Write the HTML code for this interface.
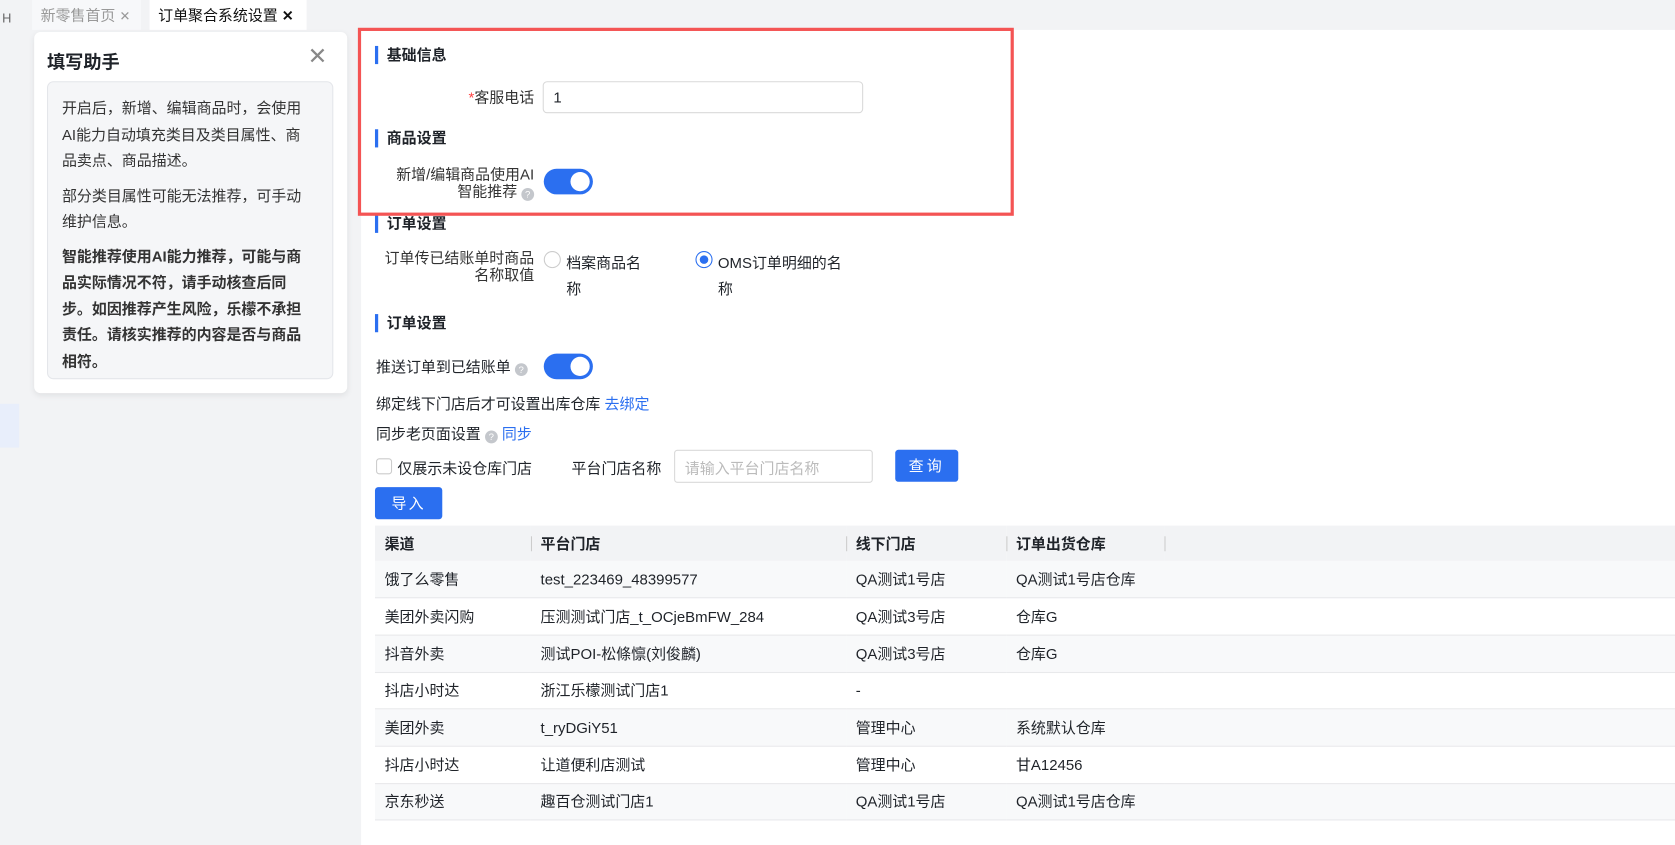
<!DOCTYPE html>
<html><head><meta charset="utf-8"><style>
*{box-sizing:border-box;margin:0;padding:0}
html,body{width:1675px;height:845px;overflow:hidden;background:#f2f3f5}
#w{position:absolute;left:0;top:0;width:1568px;height:791px;transform:scale(1.0683);transform-origin:0 0;font-family:"Liberation Sans","Noto Sans CJK SC",sans-serif;font-size:14px;color:#1f2329}
.abs{position:absolute}
.side{left:0;top:0;width:18px;height:791px;background:#f2f3f5}
.tab{position:absolute;top:0;height:28px;line-height:28px;font-size:14px;padding:0 8px}
.main{left:338px;top:28px;width:1230px;height:763px;background:#fff}
.helper{left:32px;top:30px;width:293px;height:338px;background:#fff;border-radius:6px;box-shadow:0 2px 6px rgba(0,0,0,.08)}
.hbox{position:absolute;left:12px;top:46px;width:268px;height:279px;background:#f5f6f8;border:1px solid #e4e6ea;border-radius:6px;padding:12px 16px 12px 13px;font-size:14px;line-height:24.5px;color:#333}
.hbox p{margin-bottom:8px}
.sec{position:absolute;font-weight:bold;font-size:14px;padding-left:8px;border-left:3px solid #2b6ff0;line-height:17px}
.lbl{position:absolute;text-align:right;font-size:14px;color:#333;line-height:16px}
.sw{position:absolute;width:46px;height:24px;border-radius:12px;background:#2b6ff0}
.sw:after{content:"";position:absolute;right:3px;top:3px;width:18px;height:18px;border-radius:50%;background:#fff}
.q{display:inline-block;width:12px;height:12px;border-radius:50%;background:#c4c7cc;color:#fff;font-size:9px;line-height:12px;text-align:center;vertical-align:-1px}
.btn{position:absolute;background:#2b6ff0;color:#fff;border-radius:3px;text-align:center;font-size:14px}
table{position:absolute;left:351px;top:492px;width:1217px;border-collapse:collapse}
th{background:#f2f3f5;height:33px;text-align:left;font-weight:bold;padding-left:9px;position:relative}
td{height:34.7px;padding-left:9px;border-bottom:1px solid #e8e9eb}
tr:nth-child(even) td{background:#f8f9fa}
th span{position:absolute;left:0;top:10px;width:1px;height:14px;background:#ccc}
</style></head><body><div id="w">
<div class="abs side"><div class="abs" style="left:0;top:378px;width:18px;height:41px;background:#e8eefb"></div><div class="abs" style="left:2px;top:10px;font-size:12px;color:#666">H</div></div>
<div class="abs" style="left:30px;top:0;width:102px;height:28px;background:#f7f8fa"></div>
<div class="tab" style="left:30px;color:#999">新零售首页 <span style="font-size:12px">✕</span></div>
<div class="abs" style="left:140px;top:0;width:147px;height:28px;background:#fff"></div>
<div class="tab" style="left:140px;color:#111">订单聚合系统设置 <b style="font-size:13px">✕</b></div>
<div class="abs main"></div>
<div class="abs helper">
<div class="abs" style="left:12px;top:14px;font-size:17px;font-weight:bold">填写助手</div>
<div class="abs" style="left:256px;top:10px;font-size:22px;color:#888;font-weight:300">✕</div>
<div class="hbox">
<p>开启后，新增、编辑商品时，会使用AI能力自动填充类目及类目属性、商品卖点、商品描述。</p>
<p>部分类目属性可能无法推荐，可手动维护信息。</p>
<p style="font-weight:bold">智能推荐使用AI能力推荐，可能与商品实际情况不符，请手动核查后同步。如因推荐产生风险，乐檬不承担责任。请核实推荐的内容是否与商品相符。</p>
</div></div>
<div class="abs" style="left:335px;top:26px;width:614px;height:176px;border:3px solid #f45454;z-index:3"></div>
<div class="sec" style="left:351px;top:43px">基础信息</div>
<div class="lbl" style="left:360px;top:83px;width:140px"><span style="color:#f44">*</span>客服电话</div>
<div class="abs" style="left:508px;top:76px;width:300px;height:30px;border:1px solid #d9d9d9;border-radius:4px;padding:6px 9px;font-size:14px">1</div>
<div class="sec" style="left:351px;top:121px">商品设置</div>
<div class="lbl" style="left:340px;top:155px;width:160px">新增/编辑商品使用AI<br>智能推荐 <span class="q">?</span></div>
<div class="sw" style="left:509px;top:158px"></div>
<div class="sec" style="left:351px;top:201px">订单设置</div>
<div class="lbl" style="left:340px;top:233px;width:160px">订单传已结账单时商品<br>名称取值</div>
<div class="abs" style="left:509px;top:235px;width:16px;height:16px;border:1px solid #ccc;border-radius:50%"></div>
<div class="abs" style="left:530px;top:234px;line-height:24px">档案商品名<br>称</div>
<div class="abs" style="left:651px;top:235px;width:16px;height:16px;border:1px solid #2b6ff0;border-radius:50%"><div class="abs" style="left:3px;top:3px;width:8px;height:8px;border-radius:50%;background:#2b6ff0"></div></div>
<div class="abs" style="left:672px;top:234px;line-height:24px">OMS订单明细的名<br>称</div>
<div class="sec" style="left:351px;top:294px">订单设置</div>
<div class="abs" style="left:352px;top:333px">推送订单到已结账单 <span class="q">?</span></div>
<div class="sw" style="left:509px;top:331px"></div>
<div class="abs" style="left:352px;top:368px">绑定线下门店后才可设置出库仓库 <span style="color:#2b6ff0">去绑定</span></div>
<div class="abs" style="left:352px;top:396px">同步老页面设置 <span class="q">?</span> <span style="color:#2b6ff0">同步</span></div>
<div class="abs" style="left:352px;top:429px;width:15px;height:15px;border:1px solid #ccc;border-radius:3px"></div>
<div class="abs" style="left:372px;top:428px">仅展示未设仓库门店</div>
<div class="abs" style="left:535px;top:428px">平台门店名称</div>
<div class="abs" style="left:631px;top:421px;width:186px;height:31px;border:1px solid #d9d9d9;border-radius:3px;padding:6px 9px;color:#bbb">请输入平台门店名称</div>
<div class="btn" style="left:838px;top:421px;width:59px;height:30px;line-height:30px;letter-spacing:3px">查询</div>
<div class="btn" style="left:351px;top:456px;width:63px;height:30px;line-height:30px;letter-spacing:2px">导入</div>
<table>
<tr><th style="width:146px">渠道</th><th style="width:295px"><span></span>平台门店</th><th style="width:150px"><span></span>线下门店</th><th style="width:148px"><span></span>订单出货仓库</th><th><span></span></th></tr>
<tr><td>饿了么零售</td><td>test_223469_48399577</td><td>QA测试1号店</td><td>QA测试1号店仓库</td><td></td></tr>
<tr><td>美团外卖闪购</td><td>压测测试门店_t_OCjeBmFW_284</td><td>QA测试3号店</td><td>仓库G</td><td></td></tr>
<tr><td>抖音外卖</td><td>测试POI-松條懔(刘俊麟)</td><td>QA测试3号店</td><td>仓库G</td><td></td></tr>
<tr><td>抖店小时达</td><td>浙江乐檬测试门店1</td><td>-</td><td></td><td></td></tr>
<tr><td>美团外卖</td><td>t_ryDGiY51</td><td>管理中心</td><td>系统默认仓库</td><td></td></tr>
<tr><td>抖店小时达</td><td>让道便利店测试</td><td>管理中心</td><td>甘A12456</td><td></td></tr>
<tr><td>京东秒送</td><td>趣百仓测试门店1</td><td>QA测试1号店</td><td>QA测试1号店仓库</td><td></td></tr>
</table>
</div></body></html>
